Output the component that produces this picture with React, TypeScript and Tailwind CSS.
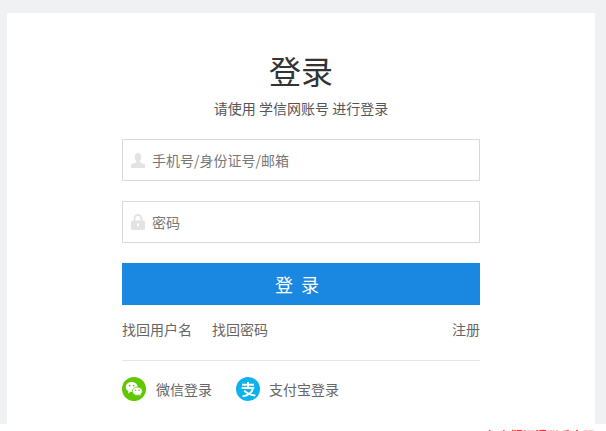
import React from 'react'

const font = "font-['Microsoft_YaHei','Noto_Sans_CJK_SC','Liberation_Sans',sans-serif]"

function UserIcon() {
  return (
    <svg width="14" height="15" viewBox="0 0 14 15" className="fill-[#e3e3e3]">
      <path d="M7 0C9.2 0 10.3 1.6 10.3 3.8C10.3 5.6 9.6 7.2 8.7 8.1V9.2L14 11.6V15H0V11.6L5.3 9.2V8.1C4.4 7.2 3.7 5.6 3.7 3.8C3.7 1.6 4.8 0 7 0Z" />
    </svg>
  )
}

function LockIcon() {
  return (
    <svg width="14" height="16" viewBox="0 0 14 16" className="fill-[#e3e3e3]">
      <path fillRule="evenodd" d="M7 0C9.6 0 11.4 1.8 11.4 4.4V6.4H12.6C13.4 6.4 14 7 14 7.8V14.6C14 15.4 13.4 16 12.6 16H1.4C.6 16 0 15.4 0 14.6V7.8C0 7 .6 6.4 1.4 6.4H2.6V4.4C2.6 1.8 4.4 0 7 0ZM7 1.9C5.5 1.9 4.6 2.9 4.6 4.4V6.4H9.4V4.4C9.4 2.9 8.5 1.9 7 1.9ZM6 9.6V12.6H8V9.6Z" />
    </svg>
  )
}

function WechatIcon() {
  return (
    <svg width="24" height="24" viewBox="0 0 24 24">
      <circle cx="12" cy="12" r="12" fill="#62c700" />
      <ellipse cx="9.7" cy="10" rx="6" ry="5" fill="#fff" />
      <path d="M6.5 13.5L6 16.4L9 14.6Z" fill="#fff" />
      <ellipse cx="15.3" cy="14.2" rx="5" ry="4.2" fill="#fff" stroke="#62c700" strokeWidth="0.8" />
      <path d="M17.5 17.4L18.6 19.2L18.4 16.6Z" fill="#fff" />
      <circle cx="7.6" cy="8.6" r="0.9" fill="#62c700" />
      <circle cx="11.6" cy="8.6" r="0.9" fill="#62c700" />
      <circle cx="13.6" cy="13.2" r="0.7" fill="#62c700" />
      <circle cx="17" cy="13.2" r="0.7" fill="#62c700" />
    </svg>
  )
}

function AlipayIcon() {
  return (
    <svg width="24" height="24" viewBox="0 0 24 24">
      <circle cx="12" cy="12" r="12" fill="#0cb1ee" />
      <path d="M6 7.8H18M12 5V10.8M5.6 11H17.2C16 15.4 12.4 18.4 6.6 19.4M8.2 13.6C10.4 16 14.6 17.8 19.4 18.6" fill="none" stroke="#fff" strokeWidth="1.9" />
    </svg>
  )
}

function Field({ icon, label }: { icon: React.ReactNode; label: string }) {
  return (
    <div className="h-[42px] border border-[#d9d9d9] flex items-center pl-2 text-sm text-[#777]">
      <span className="w-[14px] flex justify-center">{icon}</span>
      <span className="ml-[7px]">{label}</span>
    </div>
  )
}

function App() {
  return (
    <div className={`h-[431px] overflow-hidden bg-white ${font}`}>
      {/* Gray page area */}
      <div className="h-[424px] bg-[#eff1f3] pt-[13px] pl-[7px] pr-[11px]">
        <div className="h-full bg-white flex flex-col items-center">
          <h1 className="mt-[35px] text-[32px] leading-[45px] text-[#333]">登录</h1>
          <p className="mt-[5px] text-sm leading-5 text-[#555]">请使用 学信网账号 进行登录</p>

          <div className="mt-[21px] w-[358px]">
            <Field icon={<UserIcon />} label="手机号/身份证号/邮箱" />
            <div className="mt-5">
              <Field icon={<LockIcon />} label="密码" />
            </div>
            <button className="mt-5 w-full h-[42px] bg-[#1a87e0] text-white text-lg tracking-[8px]">登录</button>

            <div className="mt-[14px] flex text-sm leading-5 text-[#666]">
              <span>找回用户名</span>
              <span className="ml-5">找回密码</span>
              <span className="ml-auto">注册</span>
            </div>

            {/* Third-party login */}
            <div className="mt-[21px] border-t border-[#e5e5e5] pt-4 flex items-center text-sm text-[#666]">
              <WechatIcon />
              <span className="ml-[10px]">微信登录</span>
              <span className="ml-[24px] flex"><AlipayIcon /></span>
              <span className="ml-[9px]">支付宝登录</span>
            </div>
          </div>
        </div>
      </div>

      {/* Red notice, cut off by the window edge */}
      <div className="pt-[4px] pr-[11px] text-right text-xs leading-[16px] font-bold text-[#ff2a2a]">
        如有疑问请联系客服
      </div>
    </div>
  )
}

export default App
